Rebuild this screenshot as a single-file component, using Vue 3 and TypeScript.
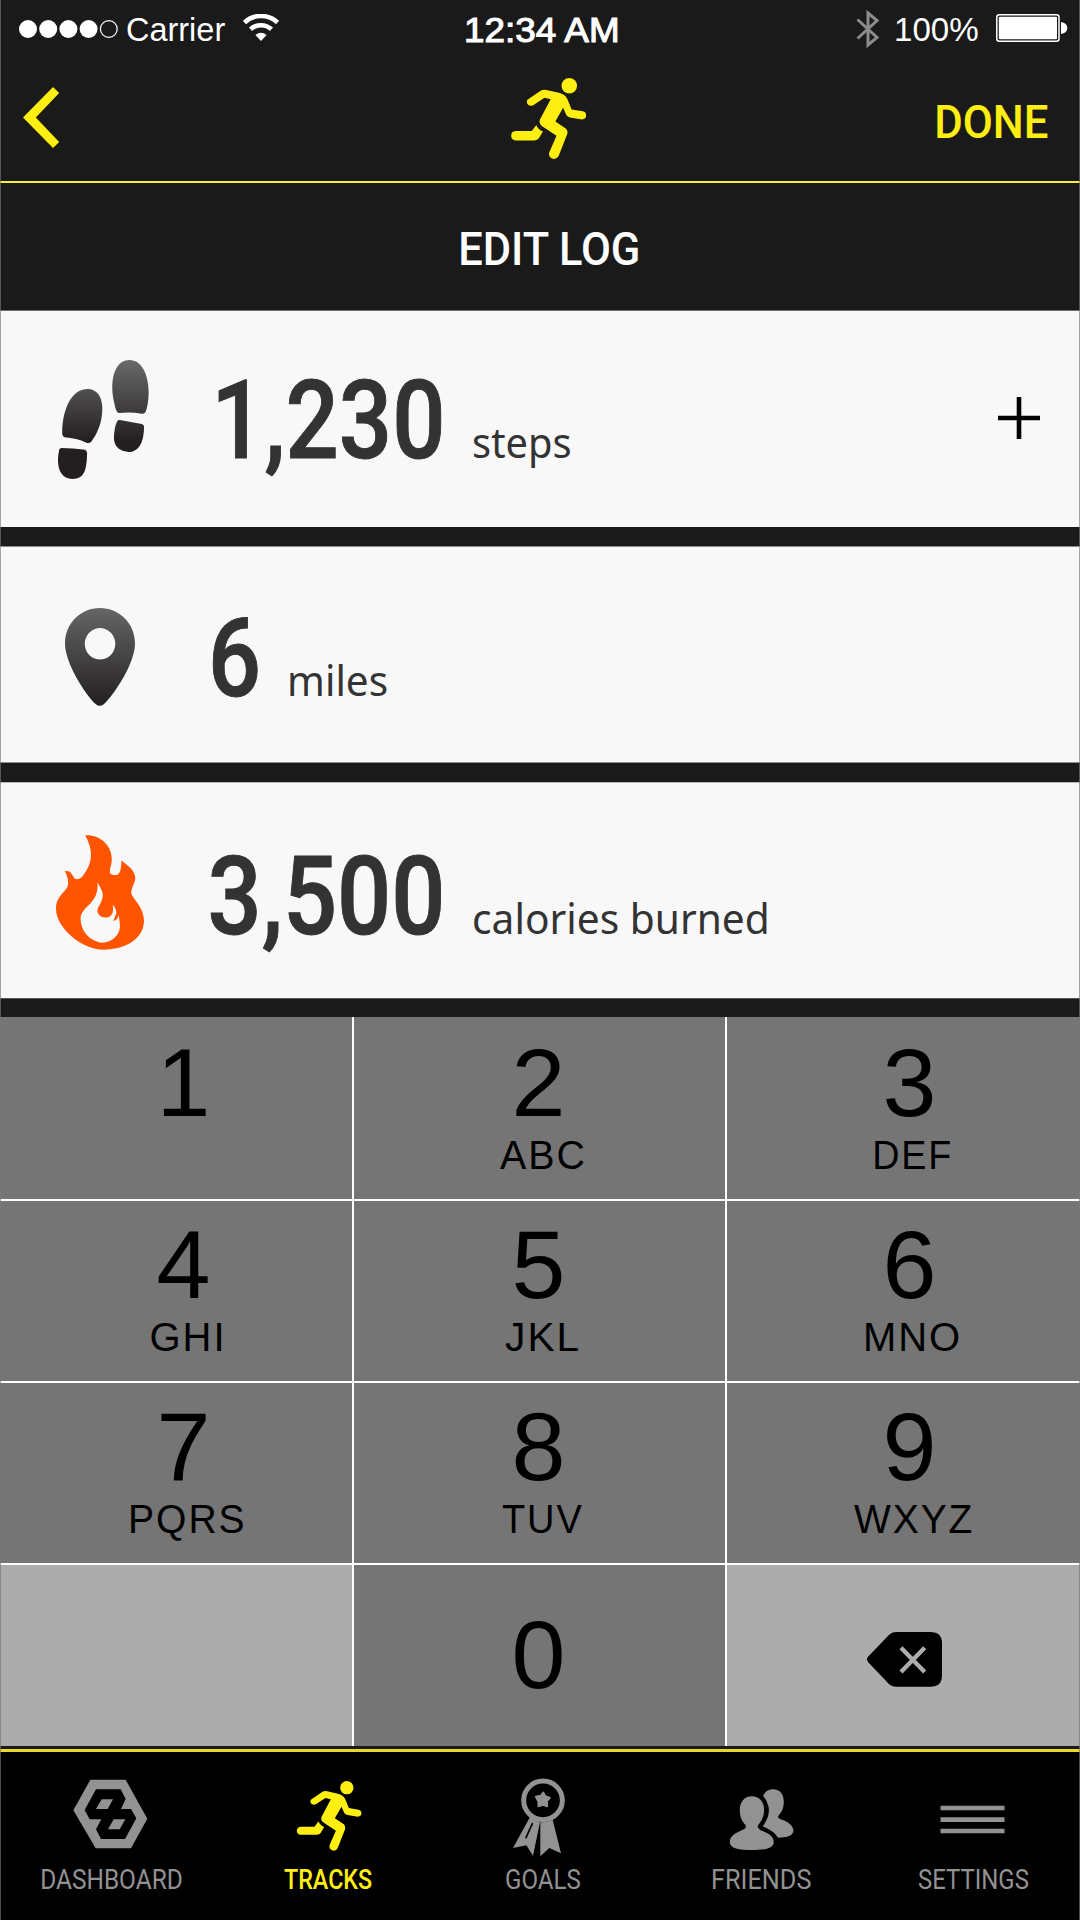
<script setup lang="ts">
import type { Directive } from 'vue'

interface Metric {
  id: 'steps' | 'miles' | 'calories'
  value: string
  valueWidth: number
  unit: string
  unitWidth: number
}

interface Key {
  digit: string
  letters?: string
  width?: number
}

interface Tab {
  id: string
  label: string
  width: number
  viewBox: string
}

const metrics: Metric[] = [
  { id: 'steps', value: '1,230', valueWidth: 222, unit: 'steps', unitWidth: 96.5 },
  { id: 'miles', value: '6', valueWidth: 44.3, unit: 'miles', unitWidth: 97 },
  { id: 'calories', value: '3,500', valueWidth: 229.8, unit: 'calories burned', unitWidth: 293 },
]

const keys: Key[] = [
  { digit: '1' },
  { digit: '2', letters: 'ABC', width: 84 },
  { digit: '3', letters: 'DEF', width: 75 },
  { digit: '4', letters: 'GHI', width: 70 },
  { digit: '5', letters: 'JKL', width: 73 },
  { digit: '6', letters: 'MNO', width: 93 },
  { digit: '7', letters: 'PQRS', width: 112 },
  { digit: '8', letters: 'TUV', width: 80 },
  { digit: '9', letters: 'WXYZ', width: 118 },
]

const tabs: Tab[] = [
  { id: 'dashboard', label: 'DASHBOARD', width: 139.3, viewBox: '215 140 240 240' },
  { id: 'tracks', label: 'TRACKS', width: 88, viewBox: '862.5 140 240 240' },
  { id: 'goals', label: 'GOALS', width: 74, viewBox: '306 140 240 240' },
  { id: 'friends', label: 'FRIENDS', width: 97.5, viewBox: '123.6 140 240 240' },
  { id: 'settings', label: 'SETTINGS', width: 109, viewBox: '757.5 140 240 240' },
]

// Condenses or widens a label so that its visible glyphs span exactly the given width.
const vFit: Directive<HTMLElement, number> = {
  mounted(el, binding) {
    const ctx = document.createElement('canvas').getContext('2d')
    if (!ctx) return
    const cs = getComputedStyle(el)
    ctx.font = `${cs.fontWeight} ${cs.fontSize} ${cs.fontFamily}`
    if (cs.letterSpacing !== 'normal') ctx.letterSpacing = cs.letterSpacing
    const m = ctx.measureText(el.textContent ?? '')
    const ink = m.actualBoundingBoxLeft + m.actualBoundingBoxRight
    el.style.width = `${binding.value}px`
    el.style.transform = `scaleX(${binding.value / ink}) translateX(${m.actualBoundingBoxLeft}px)`
  },
}

const runnerBody =
  'M931 208L966 184Q972 181 980 183L1012 190Q1028 194 1034 206L1045 233L1074 238Q1083 240 1083 249Q1082 259 1072 259L1041 254Q1034 253 1031 247L1023 229L1003 264L1030 282Q1036 287 1034 296L1012 352Q1008 361 998 361Q985 358 987 345L1006 301L968 276Q960 270 963 260L991 207L975 203L946 222Q936 226 931 219Q928 213 931 208Z'
const runnerLeg =
  'M901 289L942 289L954 273Q956 283 971 290L961 307Q957 313 949 313L901 313Q889 312 889 301Q889 290 901 289Z'
</script>

<template>
  <div class="screen">
    <div class="status">
      <svg class="signal" width="100" height="18" viewBox="0 0 100 18">
        <circle v-for="n in 4" :key="n" :cx="9 + (n - 1) * 20.2" cy="9" r="9" fill="#fff" />
        <circle cx="89.8" cy="9" r="8.4" fill="none" stroke="#fff" stroke-width="1.2" />
      </svg>
      <span v-fit="98.2" class="fit carrier">Carrier</span>
      <svg class="wifi" width="36" height="28" viewBox="0 0 36 28">
        <path d="M1.5 8.5A24 24 0 0 1 34.5 8.5" fill="none" stroke="#fff" stroke-width="4.6" />
        <path d="M7.5 15.3A15.5 15.5 0 0 1 28.5 15.3" fill="none" stroke="#fff" stroke-width="4.6" />
        <path d="M12.4 21Q18 16.6 23.6 21L18 27Z" fill="#fff" />
      </svg>
      <span v-fit="153" class="fit time">12:34 AM</span>
      <svg class="bluetooth" width="24" height="40" viewBox="0 0 24 40">
        <path d="M1.5 10.5L21 28.5L12 36V4L21 11.5L1.5 29.5" fill="none" stroke="#8c8c8c" stroke-width="3" />
      </svg>
      <span v-fit="82.3" class="fit percent">100%</span>
      <svg class="battery" width="72" height="28" viewBox="0 0 72 28">
        <rect x=".8" y=".8" width="62.2" height="26.4" rx="2.5" fill="none" stroke="#fff" stroke-width="1.5" />
        <rect x="2.8" y="2.8" width="58.2" height="22.4" rx="1" fill="#fff" />
        <path d="M65 8Q71.3 9 71.3 14T65 20Z" fill="#fff" />
      </svg>
    </div>

    <header class="nav">
      <svg class="back" width="36.2" height="61" viewBox="0 0 36.2 61">
        <path d="M30 0L36.2 6L12.8 30.5L36.2 55L30 61L0 30.5Z" fill="#ffee12" />
      </svg>
      <svg class="runner" width="75.5" height="81" viewBox="889 152 194 209">
        <circle cx="1039" cy="172" r="20" />
        <path :d="runnerBody" />
        <path :d="runnerLeg" />
      </svg>
      <span v-fit="110.3" class="fit done">DONE</span>
    </header>

    <div class="title"><span v-fit="178" class="fit">EDIT LOG</span></div>

    <main class="metrics">
      <section v-for="m in metrics" :key="m.id" class="metric" :class="m.id">
        <div class="slot">
          <svg v-if="m.id === 'steps'" width="91" height="119" viewBox="151 180 238 357" preserveAspectRatio="none">
            <defs>
              <linearGradient id="shoe" gradientUnits="userSpaceOnUse" x1="0" y1="180" x2="0" y2="425">
                <stop offset="0" stop-color="#6a6a6b" />
                <stop offset="1" stop-color="#231f20" />
              </linearGradient>
            </defs>
            <g fill="url(#shoe)">
              <path d="M229 267C252 267 267 290 267 325C267 370 252 405 238 425Q233 431 225 428Q200 415 168 412Q161 408 162 395C163 330 185 267 229 267Z" />
              <path d="M160 444Q190 444 222 449Q227 452 227 460C226 505 222 537 189 537C158 537 150 505 151 475Q152 460 154 449Q156 444 160 444Z" />
              <path d="M338 180C370 180 388 225 388 275C388 305 384 325 380 336Q377 342 370 341Q340 335 310 339Q304 336 301 323C296 300 293 285 293 265C293 215 308 180 338 180Z" />
              <path d="M313 360L370 372Q376 374 376 380C376 410 370 456 335 456C300 452 295 425 298 400Q300 375 306 364Q308 359 313 360Z" />
            </g>
          </svg>
          <svg v-else-if="m.id === 'miles'" width="70" height="98" viewBox="170 204 183 293" preserveAspectRatio="none">
            <defs>
              <linearGradient id="pin" x1="0" y1="0" x2="0" y2="1">
                <stop offset="0" stop-color="#666667" />
                <stop offset="1" stop-color="#231f20" />
              </linearGradient>
            </defs>
            <path fill="url(#pin)" fill-rule="evenodd" d="M261 204C312 204 353 250 353 310C353 370 297 465 272 491Q261 502 250 491C225 465 170 370 170 310C170 250 211 204 261 204ZM261.500 264A40 47 0 1 0 261.600 264Z" />
          </svg>
          <svg v-else width="88" height="115" viewBox="110 164 172 344" preserveAspectRatio="none">
            <path fill="#ff5500" d="M167 165C195 162 220 195 219 238C219 255 213 268 216 279Q222 287 231 282C238 272 237 255 238 240C250 255 265 270 265 293C264 310 257 320 257 338C260 355 282 380 282 420C282 475 245 507 203 507C160 507 110 440 110 385C110 345 130 335 133 315C135 300 132 285 127 272Q138 270 141 282L147 295Q155 300 163 285C180 250 185 215 167 165Z" />
            <path fill="#f8f8f8" d="M191 305C198 325 203 335 201 350C198 375 188 380 192 398Q197 413 212 410Q224 405 221 373Q228 385 228 398L222 421Q230 418 233 403C233 415 235 420 235 440C233 470 215 486 199 486C175 480 158 450 158 412C160 375 195 370 191 305Z" />
          </svg>
        </div>
        <div class="reading">
          <span v-fit="m.valueWidth" class="fit value">{{ m.value }}</span>
          <span v-fit="m.unitWidth" class="fit unit">{{ m.unit }}</span>
        </div>
        <svg v-if="m.id === 'steps'" class="plus" width="42" height="42" viewBox="0 0 42 42">
          <path d="M21 0V42M0 21H42" stroke="#000" stroke-width="4.600" />
        </svg>
      </section>
    </main>

    <div class="keypad">
      <div v-for="k in keys" :key="k.digit" class="key">
        <span class="digit">{{ k.digit }}</span>
        <span class="letters"><span v-if="k.letters" v-fit="k.width ?? 0" class="fit">{{ k.letters }}</span></span>
      </div>
      <div class="key light"></div>
      <div class="key zero"><span class="digit">0</span></div>
      <div class="key light erase">
        <svg width="75" height="54.700" viewBox="800 756 225 164">
          <path d="M888 756H990Q1025 756 1025 790V886Q1025 920 990 920H888Q874 920 865 911L803 846Q797 838 803 830L865 766Q874 756 888 756Z" />
          <path d="M902 803L973 876M973 803L902 876" stroke="#acacac" stroke-width="13" />
        </svg>
      </div>
    </div>

    <nav class="tabs">
      <div v-for="t in tabs" :key="t.id" class="tab" :class="{ active: t.id === 'tracks' }">
        <svg width="80" height="80" :viewBox="t.viewBox" fill="currentColor">
          <g v-if="t.id === 'dashboard'">
            <path d="M270 148H376L441 265L392 354H286L219 240Z" />
            <path fill="#000" fill-rule="evenodd" d="M287 177H361L376 206L362 236H392L408 264L374 326H302L287 297L303 267H268L253 239ZM304 207L287 236H322L338 207ZM340 267L323 297H358L375 267Z" />
          </g>
          <g v-else-if="t.id === 'tracks'">
            <circle cx="1039" cy="172" r="20" />
            <path :d="runnerBody" />
            <path :d="runnerLeg" />
          </g>
          <g v-else-if="t.id === 'goals'">
            <circle cx="426" cy="210" r="58" fill="none" stroke="currentColor" stroke-width="15" />
            <path fill="currentColor" stroke="currentColor" stroke-width="5" stroke-linejoin="round" d="M427 186L433 197L447 202L438 213L439 228L426 224L412 228L412 214L404 199L419 196Z" />
            <path d="M387 260Q400 270 417 275L396 376L376 345L336 353Z" />
            <path d="M418 276Q436 277 455 268L480 369L445 353L418 378Z" />
            <path d="M394 280L375 322" stroke="#000" stroke-width="5" stroke-linecap="round" />
          </g>
          <g v-else-if="t.id === 'friends'">
            <path d="M213 198C236 198 250 215 250 240C249 262 240 275 231 286Q230 294 238 299C258 307 279 315 279 335C279 355 250 359 213 359C175 359 147 355 147 335C147 315 170 305 190 297Q197 292 195 285C185 275 177 262 177 240C177 215 190 198 213 198Z" />
            <path d="M247 197C253 183 263 177 277 177C298 177 309 192 309 215C309 237 300 248 292 258Q291 264 298 266C320 273 338 285 338 302C336 318 315 322 292 322Q280 303 246 288C262 265 268 245 262 225Q257 207 247 197Z" />
          </g>
          <path v-else d="M780 226H972V240H780ZM780 261H972V275H780ZM780 295H972V309H780Z" />
        </svg>
        <span v-fit="t.width" class="fit label">{{ t.label }}</span>
      </div>
    </nav>
  </div>
</template>

<style>
body {
  margin: 0;
  background: #1a1a1a;
}
</style>

<style scoped>
.screen {
  position: relative;
  width: 1080px;
  height: 1920px;
  overflow: hidden;
  background: #1a1a1a;
  font-family: Roboto, 'Liberation Sans', sans-serif;
}
.screen::after {
  content: '';
  position: absolute;
  inset: 0;
  border: solid rgba(120, 120, 120, 0.65);
  border-width: 0 1px;
  pointer-events: none;
}
svg {
  display: block;
  flex: none;
}
.fit {
  display: block;
  flex: none;
  white-space: nowrap;
  transform-origin: 0 50%;
}
.status {
  display: flex;
  align-items: center;
  height: 58px;
  padding-left: 18.5px;
  box-sizing: border-box;
  color: #fff;
  font: 33px/40px 'Liberation Sans', sans-serif;
}
.carrier {
  margin: 2px 0 0 8.4px;
}
.wifi {
  margin: 0 0 3px 18px;
}
.time {
  margin: 1px 0 0 187.4px;
  font-size: 35.5px;
  -webkit-text-stroke: 1.1px #fff;
}
.bluetooth {
  margin-left: 236.2px;
}
.percent {
  margin: 2px 0 0 16px;
}
.battery {
  margin: 0 0 2px 17.6px;
}
.nav {
  display: flex;
  align-items: center;
  height: 123px;
  border-bottom: 2px solid #f6ee3c;
  color: #ffee12;
}
.back {
  margin: 0 0 4px 23.4px;
}
.runner {
  margin: 0 0 2px 451.4px;
  fill: #ffee12;
}
.done {
  margin: 5px 33px 0 auto;
  font-size: 46.4px;
  font-weight: 500;
  line-height: 56px;
}
.title {
  display: flex;
  justify-content: center;
  align-items: center;
  height: 127px;
  padding: 5px 0 0 20px;
  box-sizing: border-box;
  color: #fff;
  font-size: 46.4px;
  font-weight: 500;
}
.metrics {
  display: flex;
  flex-direction: column;
  gap: 19px;
  height: 707px;
}
.metric {
  display: flex;
  align-items: flex-start;
  height: 217px;
  box-sizing: border-box;
  background: #f8f8f8;
  color: #333;
}
.steps {
  box-shadow: inset 0 1px #6b6b6b;
}
.miles {
  box-shadow: inset 0 1px #8a8a8a, inset 0 -1px #8a8a8a;
}
.calories {
  box-shadow: inset 0 1px #b5b5b5, inset 0 -1px #5a5a5a;
}
.slot {
  flex: none;
  width: 211px;
  box-sizing: border-box;
}
.steps .slot {
  padding: 50px 0 0 58px;
  width: 219px;
}
.miles .slot {
  padding: 62px 0 0 65px;
  width: 213px;
}
.calories .slot {
  padding: 53px 0 0 56px;
}
.reading {
  display: flex;
  align-items: baseline;
  gap: 33px;
  padding-top: 56px;
}
.miles .reading {
  padding-top: 58px;
}
.calories .reading {
  padding-top: 60px;
}
.value {
  font-size: 109.500px;
  line-height: 110px;
  font-weight: 500;
  -webkit-text-stroke: 1px #333;
}
.unit {
  font: 42px/60px 'Noto Sans', sans-serif;
}
.plus {
  margin: 87px 40px 0 auto;
}
.keypad {
  display: grid;
  grid-template-columns: 352px 371px 353px;
  grid-template-rows: 182px 180px 180px 181px;
  gap: 2px;
  height: 729px;
  background: #fff;
  color: #000;
  font-family: 'Liberation Sans', sans-serif;
}
.key {
  display: flex;
  flex-direction: column;
  align-items: center;
  justify-content: flex-end;
  padding: 0 0 24px 12px;
  box-sizing: border-box;
  background: #757575;
}
.key:nth-child(3n + 1) {
  padding-left: 15px;
}
.key:nth-child(3n + 2) {
  padding-left: 0;
  padding-right: 2px;
}
.digit {
  font-size: 97px;
  line-height: 80px;
}
.letters {
  display: flex;
  height: 40px;
  margin: 11.6px 0 0 6px;
  font-size: 40px;
  line-height: 40px;
  letter-spacing: 2px;
}
.key.light {
  background: #acacac;
}
.key.zero {
  padding-bottom: 50.6px;
}
.key.erase {
  padding: 0 0 59.3px 1px;
}
.tabs {
  display: grid;
  grid-template-columns: 223.4px 209.4px 220.6px 217.6px 205px;
  height: 171px;
  margin-top: 3px;
  padding-top: 24.7px;
  box-sizing: border-box;
  border-top: 3px solid #e6da26;
  background: #000;
  color: #929292;
}
.tab {
  display: flex;
  flex-direction: column;
  align-items: center;
}
.tab.active {
  color: #ffee12;
}
.label {
  margin-top: 8.2px;
  font-size: 26.8px;
  line-height: 30px;
}
.active .label {
  font-weight: 500;
}
</style>
